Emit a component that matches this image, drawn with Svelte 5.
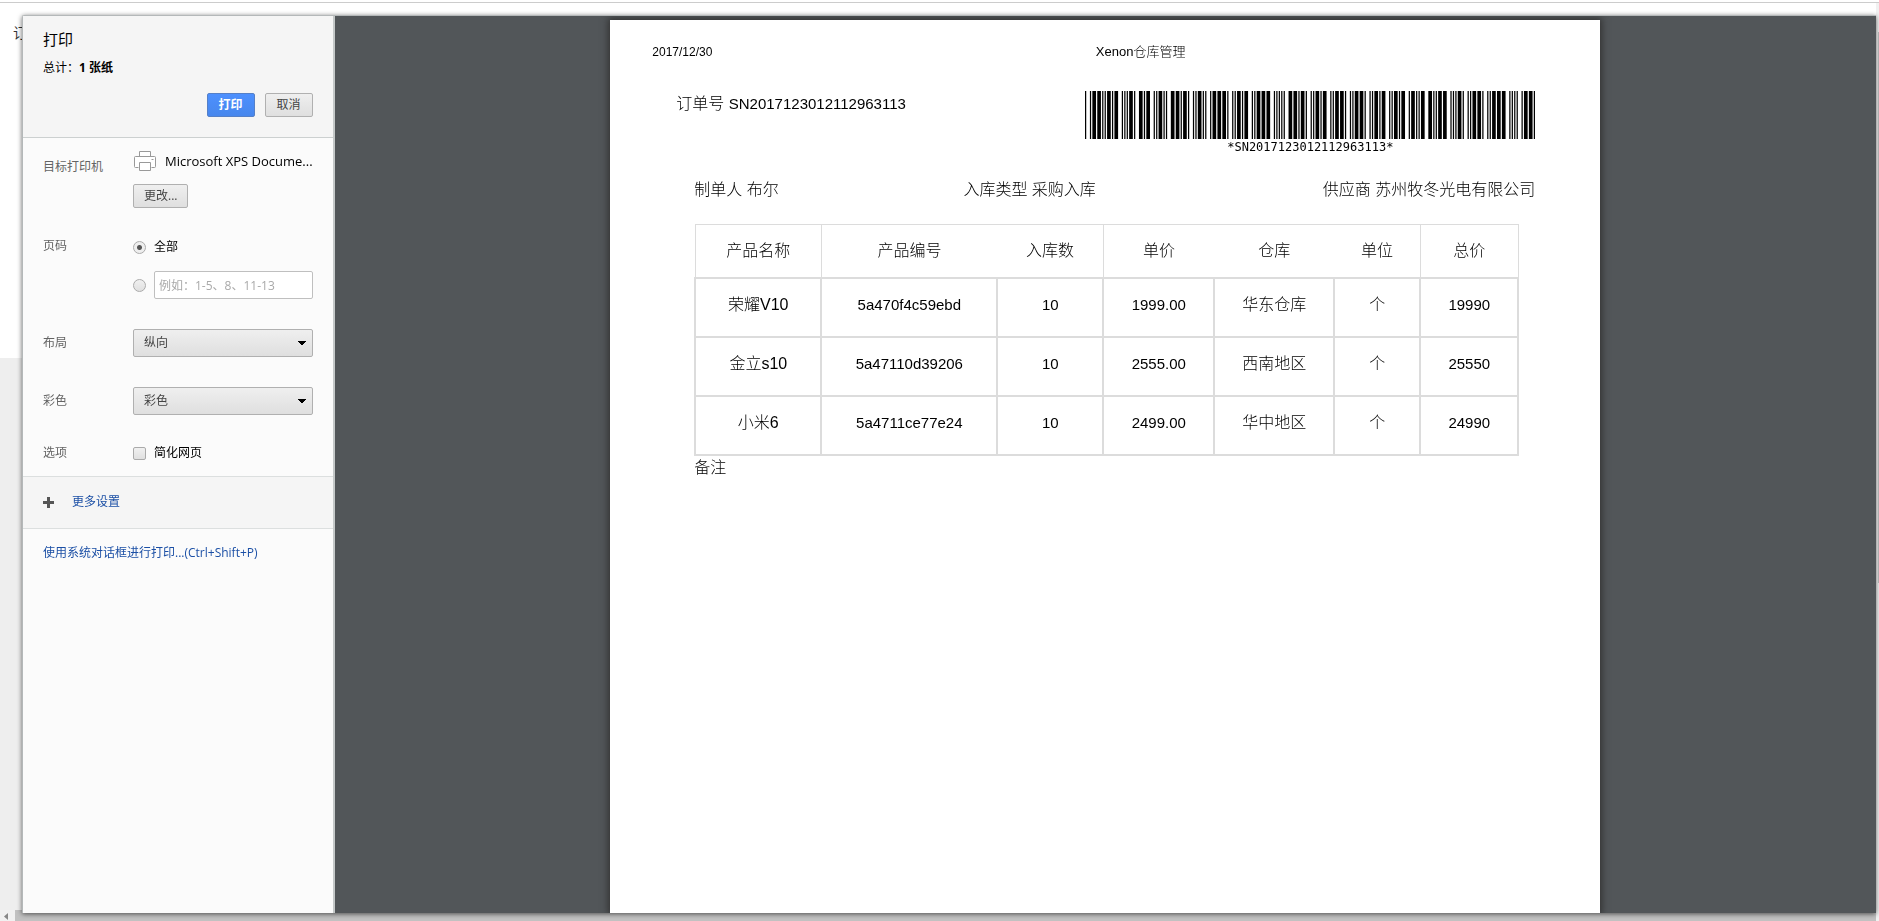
<script>
	const orderNo = "SN2017123012112963113";

	const columns = [
		{ label: "产品名称", edge: true, wide: true },
		{ label: "产品编号" },
		{ label: "入库数", edge: true },
		{ label: "单价" },
		{ label: "仓库", wide: true },
		{ label: "单位", edge: true, wide: true },
		{ label: "总价", edge: true }
	];

	const rows = [
		["荣耀V10", "5a470f4c59ebd", "10", "1999.00", "华东仓库", "个", "19990"],
		["金立s10", "5a47110d39206", "10", "2555.00", "西南地区", "个", "25550"],
		["小米6", "5a4711ce77e24", "10", "2499.00", "华中地区", "个", "24990"]
	];

	// Code 39: bar, space, bar ... n = 1 module, w = 3 modules
	const code39 = {
		0: "nnnwwnwnn",
		1: "wnnwnnnnw",
		2: "nnwwnnnnw",
		3: "wnwwnnnnn",
		6: "nnwwwnnnn",
		7: "nnnwnnwnw",
		9: "nnwwnnwnn",
		N: "nnnnwnnww",
		S: "nnwnnnwwn",
		"*": "nwnnwnwnn"
	};

	function encode(text) {
		const bars = [];
		let x = 0;
		for (const char of `*${text}*`) {
			[...code39[char]].forEach((size, i) => {
				const width = size === "w" ? 3 : 1;
				if (i % 2 === 0) bars.push({ x, width });
				x += width;
			});
			x += 1;
		}
		return { bars, total: x - 1 };
	}

	const barcode = encode(orderNo);

	let range = $state("all");
	let pages = $state("");
	let simplify = $state(false);
</script>

<div class="backdrop" aria-hidden="true">
	<div class="backdrop-main">
		<div class="backdrop-text">订</div>
		<div class="backdrop-rest"></div>
		<div class="hbar">
			<svg class="hbar-arrow" viewBox="0 0 15 11"><path d="M8 3v7L4 6.500z" fill="#888" /></svg>
			<div class="hbar-thumb"></div>
		</div>
	</div>
	<div class="vbar"><div class="vbar-thumb"></div></div>
</div>

<div class="dialog" role="dialog" aria-labelledby="print-title">
	<aside class="sidebar">
		<header class="summary">
			<h1 id="print-title">打印</h1>
			<p>总计：<b>1 张纸</b></p>
			<div class="actions">
				<button class="btn primary" type="button">打印</button>
				<button class="btn" type="button">取消</button>
			</div>
		</header>

		<div class="settings">
			<section class="row target">
				<h2>目标打印机</h2>
				<div class="control">
					<div class="printer">
						<svg width="24" height="22" viewBox="0 0 24 22" fill="#fff" stroke="#999" aria-hidden="true">
							<path d="M6.500 6V1.500h11V6" />
							<path d="M5.500 17.500H2.500q-1 0-1-1v-9q0-1 1-1h19q1 0 1 1v9q0 1-1 1h-3" />
							<path d="M6.500 12.500h11v8h-11z" />
							<path d="M18.500 9.500h2" />
						</svg>
						<span>Microsoft XPS Docume...</span>
					</div>
					<button class="btn" type="button">更改...</button>
				</div>
			</section>

			<section class="row pages">
				<h2>页码</h2>
				<div class="control">
					<label class="option">
						<input type="radio" name="range" value="all" bind:group={range} />
						全部
					</label>
					<div class="option">
						<input type="radio" name="range" value="custom" aria-label="自定义页码" bind:group={range} />
						<input type="text" placeholder="例如：1-5、8、11-13" aria-label="页码范围" bind:value={pages} />
					</div>
				</div>
			</section>

			<section class="row">
				<h2><label for="layout">布局</label></h2>
				<select id="layout" class="control">
					<option>纵向</option>
				</select>
			</section>

			<section class="row">
				<h2><label for="color">彩色</label></h2>
				<select id="color" class="control">
					<option>彩色</option>
				</select>
			</section>

			<section class="row">
				<h2>选项</h2>
				<label class="option control">
					<input type="checkbox" bind:checked={simplify} />
					简化网页
				</label>
			</section>
		</div>

		<div class="more">
			<svg width="11" height="11" viewBox="0 0 11 11" aria-hidden="true">
				<path d="M5.500 0v11M0 5.500h11" stroke="#555" stroke-width="3" />
			</svg>
			<a href="#more">更多设置</a>
		</div>
		<div class="system">
			<a href="#system">使用系统对话框进行打印...(Ctrl+Shift+P)</a>
		</div>
	</aside>

	<main class="preview">
		<article class="paper">
			<div class="paper-head">
				<span>2017/12/30</span>
				<span class="paper-title">Xenon仓库管理</span>
			</div>

			<div class="order">
				<div class="order-no">订单号 <span>{orderNo}</span></div>
				<figure class="barcode">
					<svg viewBox="0 0 {barcode.total} 48" preserveAspectRatio="none" role="img" aria-label={orderNo}>
						{#each barcode.bars as bar}
							<rect x={bar.x} y="0" width={bar.width} height="48" />
						{/each}
					</svg>
					<figcaption>*{orderNo}*</figcaption>
				</figure>
			</div>

			<div class="meta">
				<span>制单人 布尔</span>
				<span>入库类型 采购入库</span>
				<span>供应商 苏州牧冬光电有限公司</span>
			</div>

			<div class="sheet">
				<table>
					<colgroup>
						<col class="c-name" />
						<col class="c-code" />
						<col class="c-count" />
						<col class="c-price" />
						<col class="c-store" />
						<col class="c-unit" />
						<col class="c-total" />
					</colgroup>
					<thead>
						<tr>
							{#each columns as column}
								<th class:edge={column.edge} scope="col">{column.label}</th>
							{/each}
						</tr>
					</thead>
					<tbody>
						{#each rows as row}
							<tr>
								{#each row as cell, i}
									<td class:wide={columns[i].wide}>{cell}</td>
								{/each}
							</tr>
						{/each}
					</tbody>
				</table>
				<p>备注</p>
			</div>
		</article>
	</main>
</div>

<style>
	:global(body) {
		overflow: hidden;
		background: #fff;
	}

	h1,
	h2,
	p,
	figure {
		margin: 0;
		font-weight: inherit;
	}

	.backdrop {
		display: flex;
		height: 100vh;
		font-family: "Liberation Sans", "Noto Sans CJK SC", sans-serif;
	}

	.backdrop-main {
		flex: 1;
		display: flex;
		flex-direction: column;
		margin-top: 2px;
		border-top: 1px solid #ccc;
	}

	.backdrop-text {
		height: 335px;
		padding: 20px 0 0 13px;
		font-size: 14px;
		line-height: 20px;
		color: #333;
	}

	.backdrop-rest {
		flex: 1;
		background: #eee;
	}

	.hbar {
		display: flex;
		height: 11px;
		background: #f1f1f1;
	}

	.hbar-arrow {
		width: 15px;
	}

	.hbar-thumb {
		flex: 1;
		background: #c1c1c1;
	}

	.vbar {
		box-sizing: border-box;
		width: 3px;
		margin-top: 2px;
		padding-top: 29px;
		border-top: 1px solid #ccc;
		background: #f1f1f1;
	}

	.vbar-thumb {
		height: 62%;
		margin-left: 2px;
		background: #c1c1c1;
	}

	.dialog {
		position: fixed;
		inset: 15px 3px 8px 22px;
		display: flex;
		border: 1px solid #b4b8b9;
		border-width: 1px 0 0 1px;
		border-radius: 2px 0 0 0;
		box-shadow: 0 1px 5px rgba(0, 0, 0, 0.6);
		overflow: hidden;
		font-family: "Open Sans", "Noto Sans CJK SC", sans-serif;
		font-size: 12px;
		line-height: 16px;
		color: #000;
	}

	.sidebar {
		flex: 0 0 309px;
		border-right: 2px solid #c4c8c8;
		background: #fbfbfb;
	}

	.summary {
		padding: 12px 20px 20px;
		border-bottom: 1px solid #ccd0d0;
		background: #f5f5f5;
	}

	h1 {
		font-size: 15px;
		line-height: 22px;
	}

	.summary p {
		padding: 10px 0 17px;
	}

	.actions {
		display: flex;
		justify-content: flex-end;
		gap: 10px;
	}

	.btn,
	select {
		box-sizing: border-box;
		border: 1px solid #b0b0b0;
		border-radius: 2px;
		background: linear-gradient(#efefef, #dfdfdf);
		font: inherit;
		color: #444;
	}

	.btn {
		min-width: 48px;
		height: 24px;
		padding: 0 10px;
	}

	.btn.primary {
		border-color: #5580c8;
		background: linear-gradient(#4d90fe, #4787ed);
		font-weight: bold;
		color: #fff;
	}

	.settings {
		display: flex;
		flex-direction: column;
		gap: 30px;
		padding: 12px 20px 15px;
	}

	.row {
		display: flex;
		align-items: center;
	}

	h2 {
		flex: 0 0 90px;
		font-size: 12px;
		line-height: 16px;
		color: #646464;
	}

	.control {
		flex: 1;
		min-width: 0;
	}

	.target,
	.pages {
		align-items: flex-start;
	}

	.target h2 {
		padding-top: 9px;
	}

	.printer {
		display: flex;
		align-items: center;
		gap: 8px;
		height: 22px;
		margin-bottom: 12px;
		font-size: 13px;
		white-space: nowrap;
	}

	.option {
		display: flex;
		align-items: center;
		gap: 8px;
	}

	.pages label {
		height: 18px;
		margin-bottom: 15px;
	}

	input[type="radio"],
	input[type="checkbox"] {
		appearance: none;
		flex: none;
		width: 13px;
		height: 13px;
		margin: 0;
		border: 1px solid #aaa;
		border-radius: 50%;
		background: linear-gradient(#f0f0f0, #e0e0e0);
	}

	input[type="radio"]:checked {
		background: radial-gradient(circle, #555 0 2px, #eee 3px);
	}

	input[type="checkbox"] {
		border-radius: 2px;
	}

	input[type="checkbox"]:checked {
		background: #555;
	}

	input[type="text"] {
		box-sizing: border-box;
		width: 100%;
		min-width: 0;
		height: 28px;
		padding: 0 4px;
		border: 1px solid #bfbfbf;
		border-radius: 2px;
		background: #fff;
		font: inherit;
	}

	input::placeholder {
		color: #a9a9a9;
	}

	select {
		appearance: none;
		height: 28px;
		padding: 0 10px;
		background:
			conic-gradient(from -45deg at 50% 100%, #000 90deg, transparent 0) right 6px center / 8px 4px no-repeat,
			linear-gradient(#efefef, #dfdfdf);
	}

	.more {
		display: flex;
		align-items: center;
		gap: 18px;
		padding: 17px 20px 18px;
		border: 1px solid #dcdfdf;
		border-width: 1px 0;
		background: #f5f5f5;
	}

	.system {
		padding: 16px 20px;
	}

	a {
		color: #1b4fa5;
		text-decoration: none;
	}

	.preview {
		flex: 1;
		min-width: 0;
		display: flex;
		justify-content: center;
		padding-top: 4px;
		background: #525659;
	}

	.paper {
		box-sizing: border-box;
		width: 100%;
		max-width: 990px;
		padding: 24px 65px 0 42px;
		background: #fff;
		box-shadow: 0 0 7px 2px #333;
		font-family: "Liberation Sans", "Noto Sans CJK SC", sans-serif;
		font-size: 16px;
		font-weight: 300;
		line-height: 20px;
	}

	.paper-head {
		display: grid;
		grid-template-columns: 1fr 1fr;
		font-size: 12px;
		line-height: 16px;
	}

	.paper-title {
		padding-left: 2px;
		font-size: 13px;
	}

	.order {
		display: flex;
		justify-content: space-between;
		gap: 20px;
		padding: 31px 0 0 24px;
	}

	.order-no {
		padding-top: 3px;
	}

	.order-no span {
		font-size: 15px;
	}

	.barcode {
		flex: 0 1 450px;
		text-align: center;
	}

	.barcode svg {
		display: block;
		width: 100%;
		height: 48px;
	}

	figcaption {
		font-family: "DejaVu Sans Mono", monospace;
		font-size: 12px;
		font-weight: normal;
		line-height: 16px;
	}

	.meta {
		display: grid;
		grid-template-columns: 32% 1fr auto;
		padding: 25px 0 24px 42px;
	}

	.sheet {
		padding: 0 18px 0 42px;
	}

	table {
		width: 100%;
		border-collapse: collapse;
		table-layout: fixed;
		font-size: 15px;
		text-align: center;
	}

	.c-name {
		width: 126px;
	}

	.c-code {
		width: 176px;
	}

	.c-count {
		width: 106px;
	}

	.c-price {
		width: 111px;
	}

	.c-store {
		width: 120px;
	}

	.c-unit {
		width: 86px;
	}

	.c-total {
		width: 98px;
	}

	th {
		height: 52px;
		padding: 0;
		border: 1px solid #dcdcdc;
		border-width: 1px 0;
		font-size: 16px;
		font-weight: inherit;
	}

	th:first-child {
		border-left-width: 1px;
	}

	th.edge {
		border-right-width: 1px;
	}

	td {
		box-sizing: border-box;
		height: 59px;
		padding: 0 0 6px;
		border: 2px solid #dcdcdc;
	}

	td.wide {
		font-size: 16px;
	}

	.sheet p {
		padding-top: 2px;
	}
</style>
